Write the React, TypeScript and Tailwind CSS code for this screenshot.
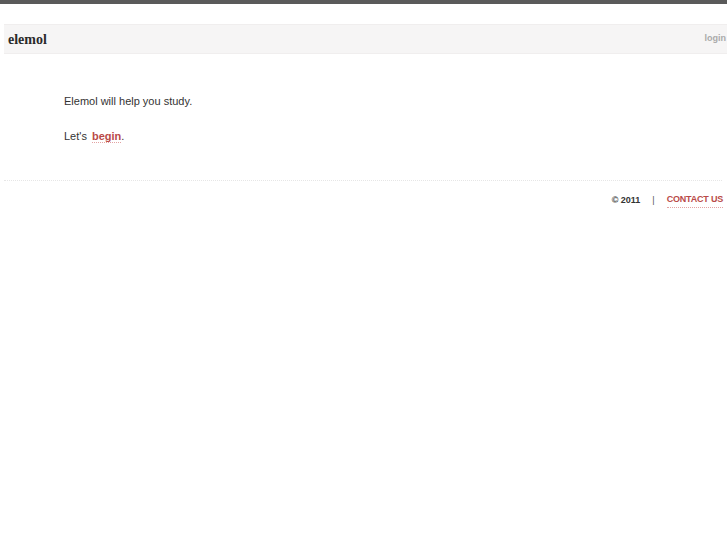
import React from "react";

const App = () => {
  return (
    <div className="min-h-screen bg-white font-['Liberation_Sans',Arial,sans-serif]">
      <div className="h-[4px] bg-[#5a5a5a]" />
      <div className="mt-[20px] ml-[4px] h-[30px] flex items-center justify-between bg-[#f6f5f5] border-y border-[#f0eeee]">
        <span className="pl-[4px] font-['Liberation_Serif',serif] font-bold text-[14px] text-[#2b2b2b]">
          elemol
        </span>
        <a className="pr-[1px] text-[9px] font-bold text-[#aaa]">login</a>
      </div>
      <div className="pl-[64px] pt-[39px] text-[11px] text-[#333]">
        <p>Elemol will help you study.</p>
        <p className="mt-[18px]">
          Let's{" "}
          <a className="ml-[2px] font-bold text-[#b94a48] border-b border-dotted border-[#e3a3a3]">begin</a>.
        </p>
      </div>
      <div className="mt-[36px] ml-[4px] mr-[5px] border-t border-dotted border-[#e6e6e6]" />
      <div className="flex justify-end items-center gap-[12px] pr-[4px] pt-[12px] text-[9px] font-bold">
        <span className="text-[#333]">© 2011</span>
        <span className="text-[#555] font-normal">|</span>
        <a className="text-[#b94a48] tracking-[-0.2px] border-b border-dotted border-[#e3a3a3]">CONTACT US</a>
      </div>
    </div>
  );
};

export default App;
